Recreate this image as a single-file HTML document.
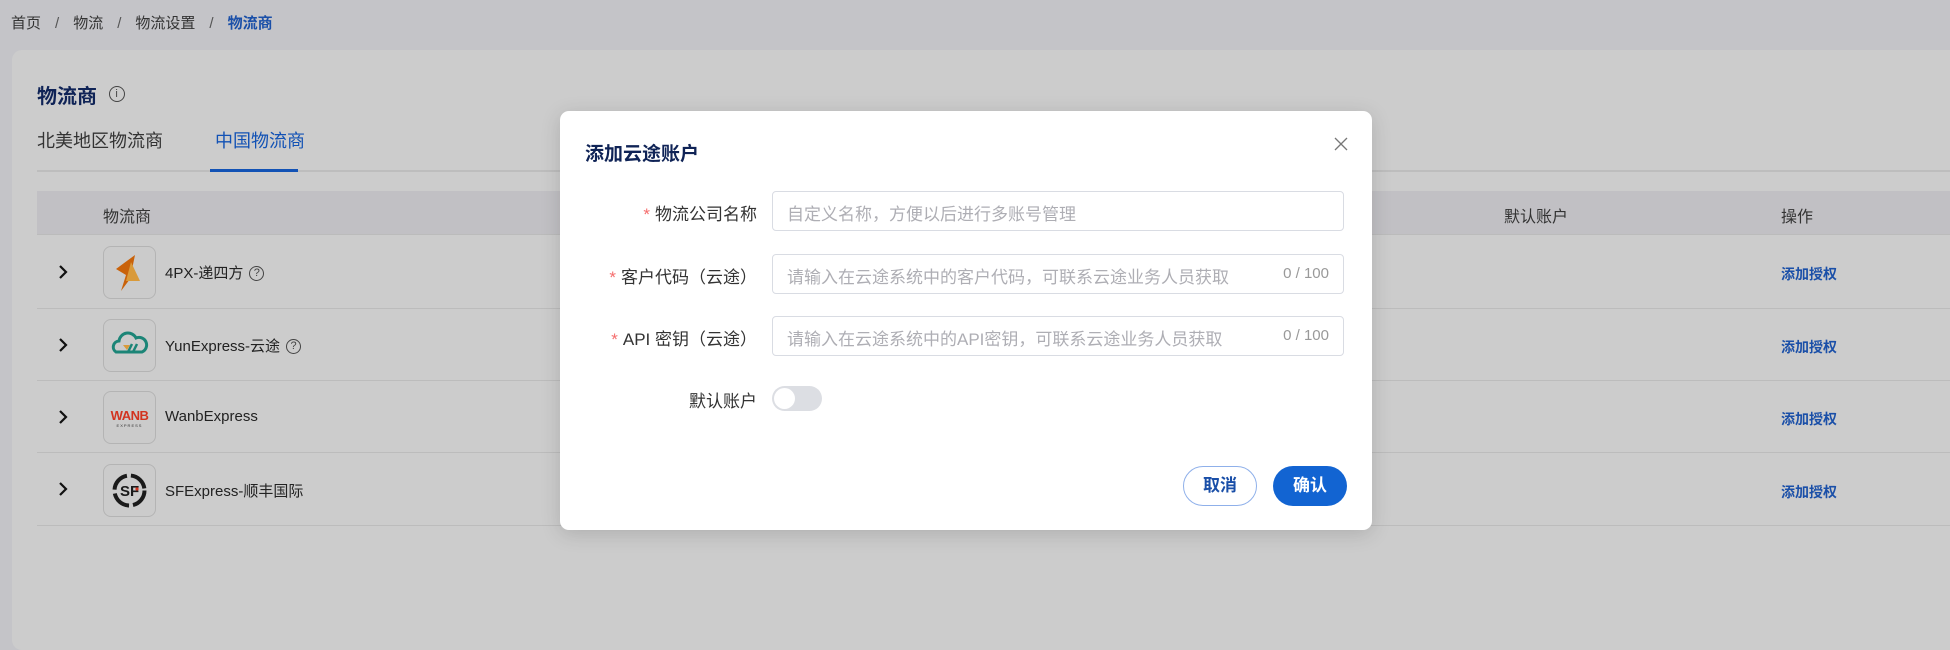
<!DOCTYPE html>
<html><head><meta charset="utf-8">
<style>
*{box-sizing:border-box;margin:0;padding:0}
body{width:1950px;height:585px;overflow:hidden;background:#c4c4c8;font-family:"Liberation Sans","Noto Sans CJK SC",sans-serif;position:relative;color:#222}
.abs{position:absolute;white-space:nowrap}
.bc{top:12px;left:11px;font-size:15px;color:#333}
.bc span.sep{margin:0 14px;color:#555}
.card{position:absolute;left:12px;top:50px;width:1950px;height:600px;background:#cccccc;border-radius:10px}
.title{left:37px;top:80px;font-size:20px;font-weight:bold;color:#0f2356}
.tabs{left:37px;top:127px;font-size:18px;color:#333}
.tabline{left:37px;top:170px;width:1913px;height:2px;background:#bdbdbd}
.tabul{left:210px;top:169px;width:88px;height:3px;background:#1252b5}
.thead{left:37px;top:191px;width:1913px;height:44px;background:#c1c0c4;border-bottom:1px solid #bbb}
.th{font-size:16px;color:#333;top:203px}
.row{left:37px;width:1913px;height:1px;background:#bcbcbc}
.chev{left:58px}
.logo{left:103px;width:53px;height:53px;border:1px solid #b4b4b4;border-radius:8px;background:#cbcbcb}
.name{left:165px;font-size:15px;color:#222}
.act{left:1781px;font-size:14px;font-weight:bold;color:#1a4fa8}
.q{display:inline-block;width:15px;height:15px;border:1.3px solid #444;border-radius:50%;font-size:11px;text-align:center;line-height:13px;margin-left:6px;vertical-align:2px;color:#444}
.modal{position:absolute;left:560px;top:111px;width:812px;height:419px;background:#fff;border-radius:9px;box-shadow:0 4px 20px rgba(0,0,0,.15)}
.lbl{font-size:17px;color:#333;text-align:right;right:615px}
.star{color:#f56c6c;margin-right:5px}
.inp{left:212px;width:572px;height:40px;border:1px solid #d9dce3;border-radius:4px;font-size:17px;color:#aeaeb4;padding:8px 14px}
.cnt{position:absolute;right:14px;top:10px;font-size:15px;color:#999}
</style></head><body>
<div class="abs bc">首页<span class="sep">/</span>物流<span class="sep">/</span>物流设置<span class="sep">/</span><b style="color:#1a4fa8">物流商</b></div>
<div class="card"></div>
<div class="abs title">物流商 <span style="display:inline-block;width:16px;height:16px;border:1.3px solid #444;border-radius:50%;font-size:11px;font-weight:normal;text-align:center;line-height:14px;vertical-align:6px;color:#444;margin-left:6px">i</span></div>
<div class="abs tabs">北美地区物流商<span style="margin-left:52px;color:#1252b5">中国物流商</span></div>
<div class="abs tabline"></div><div class="abs tabul"></div>
<div class="abs thead"></div>
<div class="abs th" style="left:103px">物流商</div>
<div class="abs th" style="left:1504px">默认账户</div>
<div class="abs th" style="left:1781px">操作</div>

<div class="abs row" style="top:308px"></div>
<div class="abs row" style="top:380px"></div>
<div class="abs row" style="top:452px"></div>
<div class="abs row" style="top:525px"></div>

<svg class="abs chev" style="top:264px" width="10" height="16" viewBox="0 0 10 16"><path d="M2 2L8 8L2 14" fill="none" stroke="#111" stroke-width="2.2"/></svg>
<svg class="abs chev" style="top:337px" width="10" height="16" viewBox="0 0 10 16"><path d="M2 2L8 8L2 14" fill="none" stroke="#111" stroke-width="2.2"/></svg>
<svg class="abs chev" style="top:409px" width="10" height="16" viewBox="0 0 10 16"><path d="M2 2L8 8L2 14" fill="none" stroke="#111" stroke-width="2.2"/></svg>
<svg class="abs chev" style="top:481px" width="10" height="16" viewBox="0 0 10 16"><path d="M2 2L8 8L2 14" fill="none" stroke="#111" stroke-width="2.2"/></svg>

<div class="abs logo" style="top:246px"><svg width="51" height="51" viewBox="0 0 51 51"><path d="M31 8 L12 22 L22 28 L17 44 L26 32 Z" fill="#c9620a"/><path d="M27 15 L36 34 L22 34 Z" fill="#d99a3a"/></svg></div>
<div class="abs logo" style="top:319px"><svg width="51" height="51" viewBox="0 0 51 51"><path d="M12 32 a6 6 0 0 1 3 -11 a9 9 0 0 1 17 -3 a7 7 0 0 1 6 14 Z" fill="none" stroke="#1c8577" stroke-width="3"/><path d="M19 25 L26 25 L23 30 Z" fill="#d99a3a"/><path d="M24 32 L28 24 M29 32 L33 24" stroke="#1c8577" stroke-width="2.5"/></svg></div>
<div class="abs logo" style="top:391px"><div style="text-align:center;font-size:13px;font-weight:bold;color:#d2331f;margin-top:16px;letter-spacing:-.5px">WANB</div><div style="text-align:center;font-size:4px;color:#333;letter-spacing:1px">EXPRESS</div></div>
<div class="abs logo" style="top:464px"><svg width="51" height="51" viewBox="0 0 51 51"><circle cx="25.5" cy="25.5" r="15" fill="none" stroke="#1a1a1a" stroke-width="4" stroke-dasharray="20 4"/><text x="16" y="31" font-size="15" font-weight="bold" font-family="Liberation Sans" fill="#1a1a1a">SF</text><circle cx="33" cy="24" r="1.6" fill="#d2331f"/></svg></div>

<div class="abs name" style="top:262px">4PX-递四方<span class="q">?</span></div>
<div class="abs name" style="top:335px">YunExpress-云途<span class="q">?</span></div>
<div class="abs name" style="top:408px">WanbExpress</div>
<div class="abs name" style="top:480px">SFExpress-顺丰国际</div>

<div class="abs act" style="top:264px">添加授权</div>
<div class="abs act" style="top:337px">添加授权</div>
<div class="abs act" style="top:409px">添加授权</div>
<div class="abs act" style="top:482px">添加授权</div>

<div class="modal">
  <div class="abs" style="left:25px;top:28px;font-size:19px;font-weight:bold;color:#0f2356">添加云途账户</div>
  <svg class="abs" style="left:774px;top:26px" width="14" height="14" viewBox="0 0 14 14"><path d="M1 1L13 13M13 1L1 13" stroke="#777" stroke-width="1.3"/></svg>
  <div class="abs lbl" style="top:89px"><span class="star">*</span>物流公司名称</div>
  <div class="abs inp" style="top:80px">自定义名称，方便以后进行多账号管理</div>
  <div class="abs lbl" style="top:152px"><span class="star">*</span>客户代码（云途）</div>
  <div class="abs inp" style="top:143px">请输入在云途系统中的客户代码，可联系云途业务人员获取<span class="cnt">0 / 100</span></div>
  <div class="abs lbl" style="top:214px"><span class="star">*</span>API 密钥（云途）</div>
  <div class="abs inp" style="top:205px">请输入在云途系统中的API密钥，可联系云途业务人员获取<span class="cnt">0 / 100</span></div>
  <div class="abs lbl" style="top:276px">默认账户</div>
  <div class="abs" style="left:212px;top:275px;width:50px;height:25px;border-radius:13px;background:#dcdee3"><div style="position:absolute;left:2px;top:2px;width:21px;height:21px;border-radius:50%;background:#fff"></div></div>
  <div class="abs" style="left:623px;top:355px;width:74px;height:40px;border:1px solid #8fb0ea;border-radius:20px;text-align:center;line-height:38px;font-size:17px;font-weight:bold;color:#1a4fa8">取消</div>
  <div class="abs" style="left:713px;top:355px;width:74px;height:40px;background:#1264d2;border-radius:20px;text-align:center;line-height:40px;font-size:17px;font-weight:bold;color:#fff">确认</div>
</div>
</body></html>
